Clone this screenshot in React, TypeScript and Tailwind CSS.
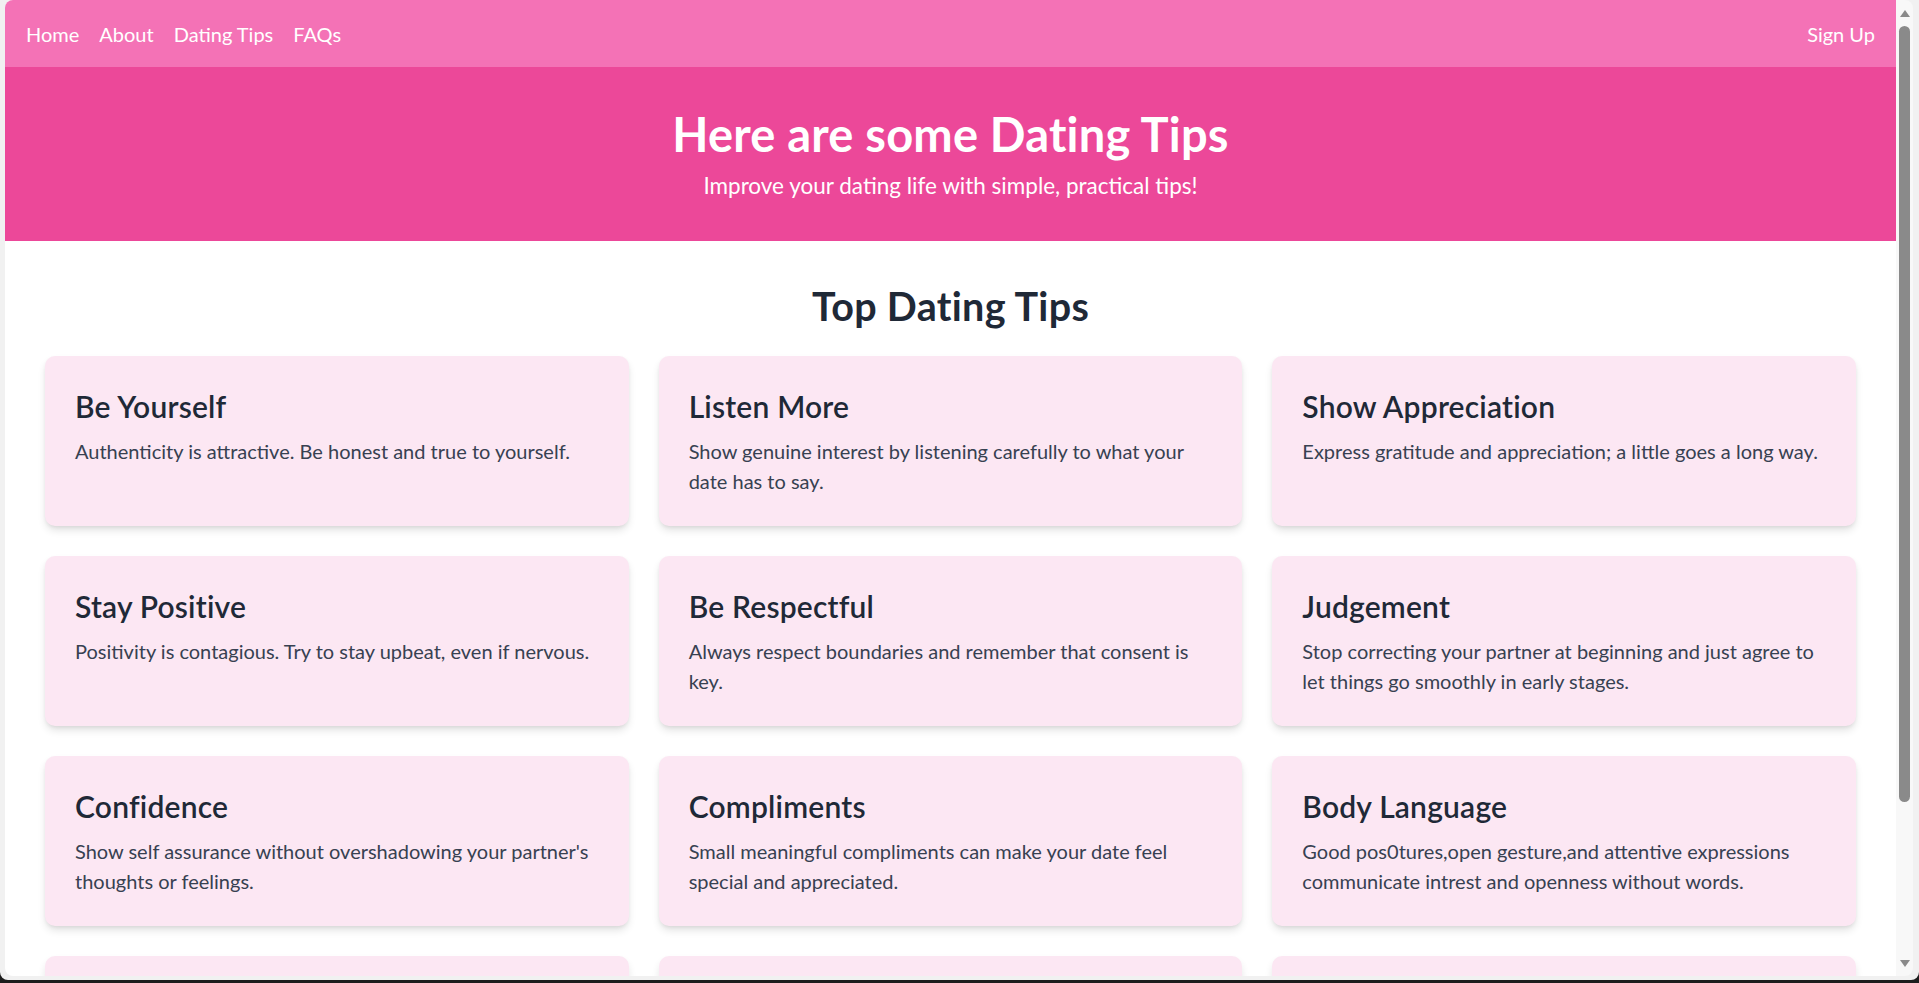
import React from 'react';

type Tip = { title: string; text: string };

const tips: Tip[] = [
  { title: 'Be Yourself', text: 'Authenticity is attractive. Be honest and true to yourself.' },
  { title: 'Listen More', text: 'Show genuine interest by listening carefully to what your date has to say.' },
  { title: 'Show Appreciation', text: 'Express gratitude and appreciation; a little goes a long way.' },
  { title: 'Stay Positive', text: 'Positivity is contagious. Try to stay upbeat, even if nervous.' },
  { title: 'Be Respectful', text: 'Always respect boundaries and remember that consent is key.' },
  { title: 'Judgement', text: 'Stop correcting your partner at beginning and just agree to let things go smoothly in early stages.' },
  { title: 'Confidence', text: "Show self assurance without overshadowing your partner's thoughts or feelings." },
  { title: 'Compliments', text: 'Small meaningful compliments can make your date feel special and appreciated.' },
  { title: 'Body Language', text: 'Good pos0tures,open gesture,and attentive expressions communicate intrest and openness without words.' },
];

const TipCard: React.FC<{ tip: Tip }> = ({ tip }) => (
  <div className="bg-[#fce7f3] rounded-[10px] p-[30px] shadow-[0_5px_8px_-1px_rgba(0,0,0,0.12),0_2px_5px_-2px_rgba(0,0,0,0.1)]">
    <h3 className="text-[30px] leading-[40px] font-semibold text-[#1f2937] mb-[10px] tracking-[0.2px]">{tip.title}</h3>
    <p className="text-[20px] leading-[30px] text-[#374151]">{tip.text}</p>
  </div>
);

export default function App() {
  return (
    <div className="w-[1919px] h-[983px] overflow-hidden bg-[#1c1c1c] flex flex-col font-['Lato','Liberation_Sans',sans-serif]">
      <div className="h-[980px] flex bg-[#f1f1f1] pl-[5px] pr-[6px] pb-[4px] rounded-b-[8px]">
        {/* page */}
        <div className="flex-1 bg-white rounded-tl-[8px] rounded-bl-[8px] overflow-hidden">
          <nav className="h-[67px] bg-[#f472b6] flex items-center justify-between px-[21px] text-white text-[20px]">
            <div className="flex items-center gap-[20px]">
              <a href="#">Home</a>
              <a href="#">About</a>
              <a href="#">Dating Tips</a>
              <a href="#">FAQs</a>
            </div>
            <a href="#">Sign Up</a>
          </nav>

          <header className="bg-[#ec4899] text-white text-center pt-[42px] pb-[38px]">
            <h1 className="text-[47px] leading-[51px] font-bold mb-[9px] tracking-[0.2px]">Here are some Dating Tips</h1>
            <p className="text-[22.5px] leading-[34px]">Improve your dating life with simple, practical tips!</p>
          </header>

          <section className="px-[40px] pt-[42px]">
            <h2 className="text-center text-[39.5px] leading-[46px] font-bold text-[#1f2937] mb-[27px] tracking-[0.3px]">Top Dating Tips</h2>
            <div className="grid grid-cols-3 gap-[30px]">
              {tips.map((t) => (
                <TipCard key={t.title} tip={t} />
              ))}
              {/* next row, below the fold */}
              <div className="h-[170px] bg-[#fce7f3] rounded-[10px] shadow-[0_5px_8px_-1px_rgba(0,0,0,0.12)]" />
              <div className="h-[170px] bg-[#fce7f3] rounded-[10px] shadow-[0_5px_8px_-1px_rgba(0,0,0,0.12)]" />
              <div className="h-[170px] bg-[#fce7f3] rounded-[10px] shadow-[0_5px_8px_-1px_rgba(0,0,0,0.12)]" />
            </div>
          </section>
        </div>

        {/* scrollbar */}
        <div className="w-[17px] bg-[#f8f8f8] rounded-tr-[8px] rounded-br-[8px] flex flex-col items-center">
          <div className="h-[26px] flex items-center justify-center">
            <svg width="10" height="7" viewBox="0 0 10 7"><path d="M5 0 L10 7 L0 7 Z" fill="#8a8a8a" /></svg>
          </div>
          <div className="w-[11px] h-[776px] rounded-full bg-[#8a8a8a]" />
          <div className="flex-1" />
          <div className="h-[26px] flex items-center justify-center">
            <svg width="10" height="7" viewBox="0 0 10 7"><path d="M0 0 L10 0 L5 7 Z" fill="#8a8a8a" /></svg>
          </div>
        </div>
      </div>
      <div className="flex-1 bg-[#1c1c1c]" />
    </div>
  );
}
